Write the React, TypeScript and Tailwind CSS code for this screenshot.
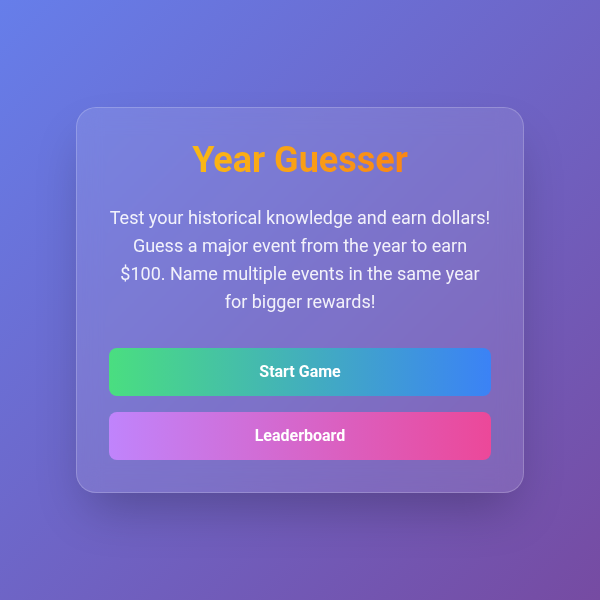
import React from "react";

export default function App() {
  return (
    <div className="min-h-screen w-full flex items-center justify-center bg-linear-to-br/srgb from-[#667eea] to-[#764ba2] font-['Roboto',sans-serif]">
      <div className="w-full max-w-md rounded-[20px] border border-white/20 bg-white/10 p-8 shadow-2xl backdrop-blur-md text-center">
        <h1 className="mb-6 text-4xl font-bold bg-linear-to-r/srgb from-[#facc15] to-[#f97316] bg-clip-text text-transparent">
          Year Guesser
        </h1>
        <p className="mb-8 text-lg text-white/90">
          Test your historical knowledge and earn dollars! Guess a major event from the year to earn $100. Name multiple events in the same year for bigger rewards!
        </p>
        <div className="flex flex-col gap-4">
          <button className="w-full rounded-lg bg-linear-to-r/srgb from-[#4ade80] to-[#3b82f6] py-3 text-base font-bold text-white">
            Start Game
          </button>
          <button className="w-full rounded-lg bg-linear-to-r/srgb from-[#c084fc] to-[#ec4899] py-3 text-base font-bold text-white">
            Leaderboard
          </button>
        </div>
      </div>
    </div>
  );
}
